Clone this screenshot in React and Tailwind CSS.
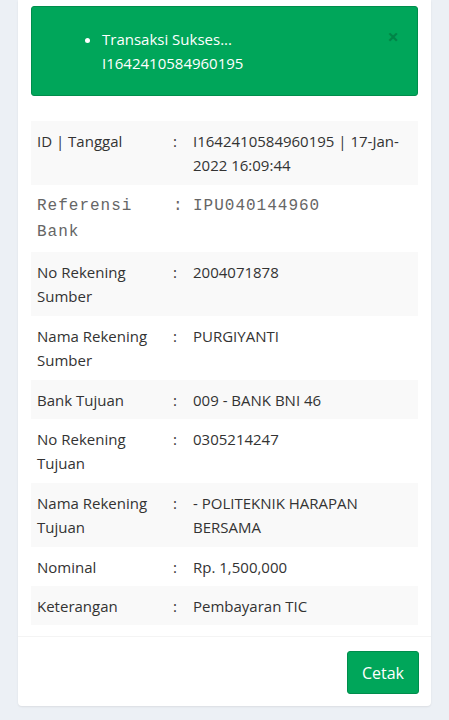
export default function App() {
  const rows = [
    ["ID | Tanggal", "I1642410584960195 | 17-Jan-2022 16:09:44", true, false, 2],
    ["Referensi Bank", "IPU040144960", false, true, 2],
    ["No Rekening Sumber", "2004071878", true, false, 2],
    ["Nama Rekening Sumber", "PURGIYANTI", false, false, 2],
    ["Bank Tujuan", "009 - BANK BNI 46", true, false, 1],
    ["No Rekening Tujuan", "0305214247", false, false, 2],
    ["Nama Rekening Tujuan", "- POLITEKNIK HARAPAN BERSAMA", true, false, 2],
    ["Nominal", "Rp. 1,500,000", false, false, 1],
    ["Keterangan", "Pembayaran TIC", true, false, 1],
  ];
  const mono = { fontFamily: '"Liberation Mono", "Courier New", monospace' };
  return (
    <div
      className="min-h-[720px] bg-[#ecf0f5] px-[18px] text-[#333]"
      style={{ fontFamily: '"Open Sans", "Noto Sans", sans-serif' }}
    >
      <div className="bg-white rounded-b-[4px] shadow-[0_1px_2px_rgba(0,0,0,0.08)]">
        <div className="px-[13px] pt-[6px] pb-[11px]">
          <div className="relative rounded-[3px] bg-[#00a65a] border border-[#008d4c] text-white pl-[70px] pr-[40px] pt-[20px] pb-[20px] text-[15px] leading-[24px]">
            <button className="absolute right-[18px] top-[20px] text-[20px] leading-[20px] font-bold text-black opacity-20">
              ×
            </button>
            <ul className="list-disc">
              <li>
                Transaksi Sukses...
                <br />
                I1642410584960195
              </li>
            </ul>
          </div>
          <table className="w-full mt-[25px] border-collapse text-[15px] leading-[24px]">
            <tbody>
              {rows.map(([l, v, striped, isMono, lines], i) => {
                const pad = lines === 1 || isMono ? "pt-[8px] pb-[7px] " : "pt-[8px] pb-[8px] ";
                const m = isMono ? "text-[#666] text-[16px] leading-[26px] " : "";
                return (
                  <tr key={i} className={striped ? "bg-[#f9f9f9]" : "bg-white"}>
                    <td
                      className={"align-top pl-[6px] pr-[6px] w-[140px] " + pad + m + (isMono ? "tracking-[1px]" : "")}
                      style={isMono ? mono : undefined}
                    >
                      {l}
                    </td>
                    <td
                      className={"align-top pl-[2px] w-[22px] " + pad + m}
                      style={isMono ? mono : undefined}
                    >
                      :
                    </td>
                    <td
                      className={"align-top pr-[6px] " + pad + m + (isMono ? "tracking-[1px]" : "")}
                      style={isMono ? mono : undefined}
                    >
                      {v}
                    </td>
                  </tr>
                );
              })}
            </tbody>
          </table>
        </div>
        <div className="border-t border-[#f4f4f4] px-[12px] pt-[14px] pb-[12px] flex justify-end">
          <button className="bg-[#00a65a] border border-[#008d4c] text-white rounded-[3px] px-[14px] h-[43px] text-[16px]">
            Cetak
          </button>
        </div>
      </div>
    </div>
  );
}
